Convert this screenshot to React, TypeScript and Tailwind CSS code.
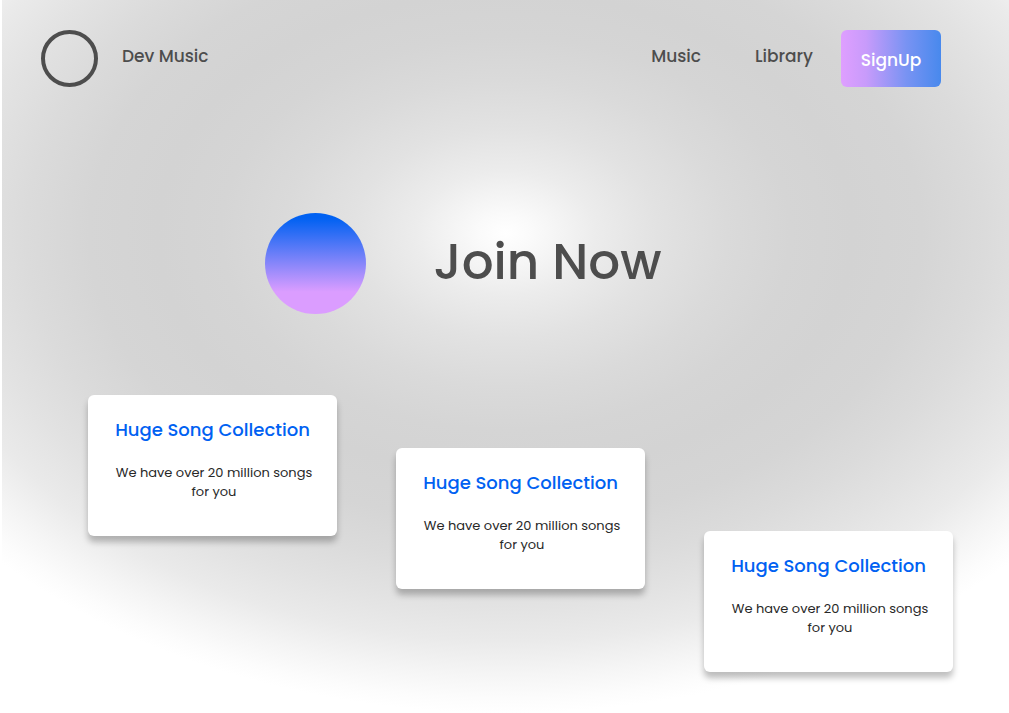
import React from "react";

type Feature = { id: string; title: string; text: string; offset: string };

const features: Feature[] = [
  { id: "first", title: "Huge Song Collection", text: "We have over 20 million songs for you", offset: "mt-0" },
  { id: "second", title: "Huge Song Collection", text: "We have over 20 million songs for you", offset: "mt-[53px]" },
  { id: "third", title: "Huge Song Collection", text: "We have over 20 million songs for you", offset: "mt-[136px]" },
];

function Header() {
  return (
    <header className="flex items-center pt-[30px] pr-[68px] pl-[39px] text-[17px] font-medium text-[#4d4d4d]">
      <a href="#home" className="flex items-center gap-6">
        <span className="size-[57px] rounded-full border-4 border-[#4d4d4d]" />
        <span className="pb-1">Dev Music</span>
      </a>
      <nav className="ml-auto flex items-center">
        <a href="#music" className="mr-[54px] pb-1">Music</a>
        <a href="#library" className="mr-7 pb-1">Library</a>
        <button
          type="button"
          className="h-[57px] w-[100px] rounded-md bg-[linear-gradient(90deg,#df9fff_0%,#c89bfb_25%,#7993f3_65%,#4889ed_100%)] pt-1 text-white"
        >
          SignUp
        </button>
      </nav>
    </header>
  );
}

function Hero() {
  return (
    <section className="mt-[126px] flex items-center justify-center gap-[68px] pr-[85px]">
      <div className="size-[101px] rounded-full bg-[linear-gradient(180deg,#0061f2_5%,#db9dff_78%)]" />
      <h1 className="pb-1 text-[50px] leading-none font-medium whitespace-nowrap text-[#4d4d4d]">Join Now</h1>
    </section>
  );
}

function FeatureCard({ feature }: { feature: Feature }) {
  return (
    <article
      className={`${feature.offset} min-h-[141px] rounded-md bg-white px-4 pt-[23px] text-center shadow-[0_6px_6px_rgba(0,0,0,0.25)]`}
    >
      <h2 className="text-lg leading-6 font-medium whitespace-nowrap text-[#0061f2]">{feature.title}</h2>
      <p className="mx-auto mt-[21px] max-w-[208px] pl-[3px] text-[13px] leading-[19px] text-[#282828]">{feature.text}</p>
    </article>
  );
}

export default function App() {
  return (
    <main className="min-h-screen border-l-2 border-white bg-[radial-gradient(694px_480px_at_50%_233px,#ffffff_0%,#fafafa_4%,#ececec_13%,#e2e2e2_22%,#dadada_32%,#d5d5d5_41%,#d3d3d3_50%,#d5d5d5_60%,#dbdbdb_69%,#e2e2e2_77%,#eaeaea_85%,#f5f5f5_92%,#fcfcfc_97%,#ffffff_100%)] bg-white font-[Poppins,Inter,sans-serif]">
      <Header />
      <Hero />
      <section className="mt-[81px] grid grid-cols-3 items-start gap-[59px] pr-14 pb-10 pl-[86px]">
        {features.map((feature) => (
          <FeatureCard key={feature.id} feature={feature} />
        ))}
      </section>
    </main>
  );
}
